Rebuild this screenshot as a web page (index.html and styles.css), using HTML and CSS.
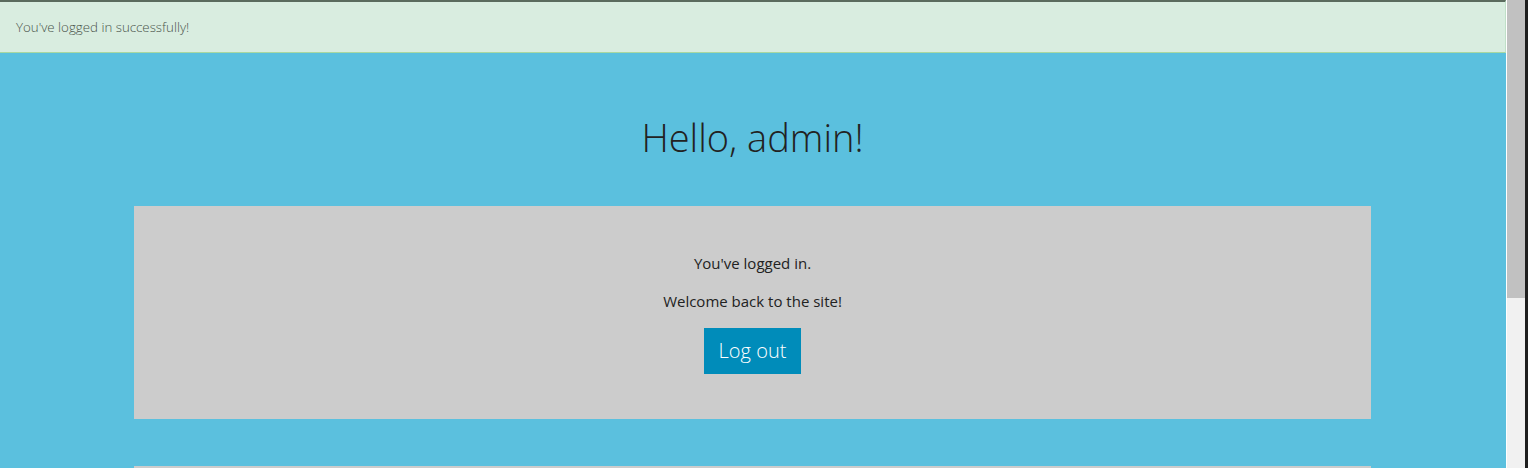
FILE: index.html
```html
<!DOCTYPE html>
<html lang="en">
<head>
<meta charset="utf-8">
<title>Hello, admin!</title>
<link rel="stylesheet" href="styles.css">
</head>
<body>
<div class="viewport">
  <div class="page">
    <div class="alert">You've logged in successfully!</div>
    <main class="hero">
      <h1 class="title">Hello, admin!</h1>
      <section class="panel">
        <p class="line">You've logged in.</p>
        <p class="line">Welcome back to the site!</p>
        <a class="button" href="#">Log out</a>
      </section>
      <section class="panel panel-next"></section>
    </main>
  </div>
  <div class="scrollbar" aria-hidden="true">
    <div class="thumb"></div>
  </div>
</div>
</body>
</html>
```
FILE: styles.css
```css
html, body {
  margin: 0;
  padding: 0;
  height: 100%;
  overflow: hidden;
}
body {
  font-family: "Open Sans", "Liberation Sans", sans-serif;
  color: #222222;
  background: #5bc0de;
}
.viewport {
  display: flex;
  height: 100vh;
}
.page {
  flex: 1;
  min-width: 0;
  overflow: hidden;
  background: #5bc0de;
}
.scrollbar {
  width: 18px;
  flex: none;
  background: #f1f1f1;
  border-left: 1px solid #ffffff;
  border-right: 3px solid #1e1e1e;
  display: flex;
  flex-direction: column;
}
.thumb {
  height: 298px;
  background: #c1c1c1;
}
.alert {
  box-sizing: border-box;
  height: 53px;
  padding: 0 16px;
  display: flex;
  align-items: center;
  background: #d9ede0;
  border-top: 2px solid #5b6b5e;
  border-bottom: 1px solid #a9d8a0;
  border-right: 1px solid #c0e0c8;
  font-size: 13.3px;
  font-weight: 300;
  color: #4a554c;
}
.hero {
  padding: 60px 135px 60px 134px;
  display: flex;
  flex-direction: column;
  align-items: stretch;
}
.title {
  margin: 0 0 45px;
  text-align: center;
  font-weight: 300;
  font-size: 38px;
  line-height: 48px;
  color: #222222;
}
.panel {
  background: #cccccc;
  height: 213px;
  flex: none;
  box-sizing: border-box;
  padding: 47px 0 0;
  display: flex;
  flex-direction: column;
  align-items: center;
}
.panel-next {
  margin-top: 47px;
}
.line {
  margin: 0 0 17px;
  font-size: 15px;
  line-height: 21px;
  color: #222222;
}
.line + .line {
  margin-bottom: 16px;
}
.button {
  display: block;
  width: 97px;
  height: 46px;
  box-sizing: border-box;
  background: #008cba;
  color: #ffffff;
  text-decoration: none;
  font-size: 20px;
  font-weight: 300;
  line-height: 46px;
  text-align: center;
}
```
